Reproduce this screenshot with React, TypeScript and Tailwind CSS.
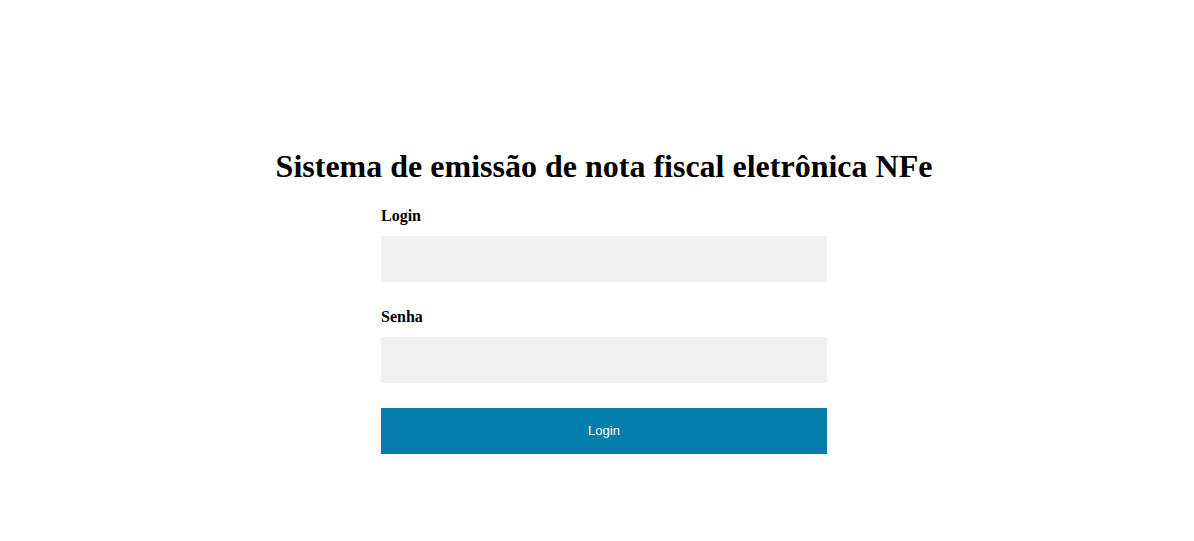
export default function App() {
  return (
    <main className="flex min-h-screen flex-col items-center bg-white px-4 pt-[148px] pb-8 font-['Liberation_Serif',serif] text-black">
      <div className="flex w-full flex-col items-center pl-[14px]">
        <h1 className="text-center text-[32px] leading-[37px] font-bold">
          Sistema de emissão de nota fiscal eletrônica NFe
        </h1>
        <form className="mt-[21px] w-full max-w-[446px]" onSubmit={(e) => e.preventDefault()}>
          <label htmlFor="login" className="block text-[16px] leading-5 font-bold">
            Login
          </label>
          <input
            id="login"
            type="text"
            className="mt-[10px] block h-[46px] w-full bg-[#f1f1f1] px-4 text-[16px] outline-none"
          />
          <label htmlFor="senha" className="mt-[25px] block text-[16px] leading-5 font-bold">
            Senha
          </label>
          <input
            id="senha"
            type="password"
            className="mt-[10px] block h-[46px] w-full bg-[#f1f1f1] px-4 text-[16px] outline-none"
          />
          <button
            type="submit"
            className="mt-[25px] block h-[46px] w-full cursor-pointer bg-[#047cac] font-['Liberation_Sans',sans-serif] text-[13px] text-white"
          >
            Login
          </button>
        </form>
      </div>
    </main>
  );
}
